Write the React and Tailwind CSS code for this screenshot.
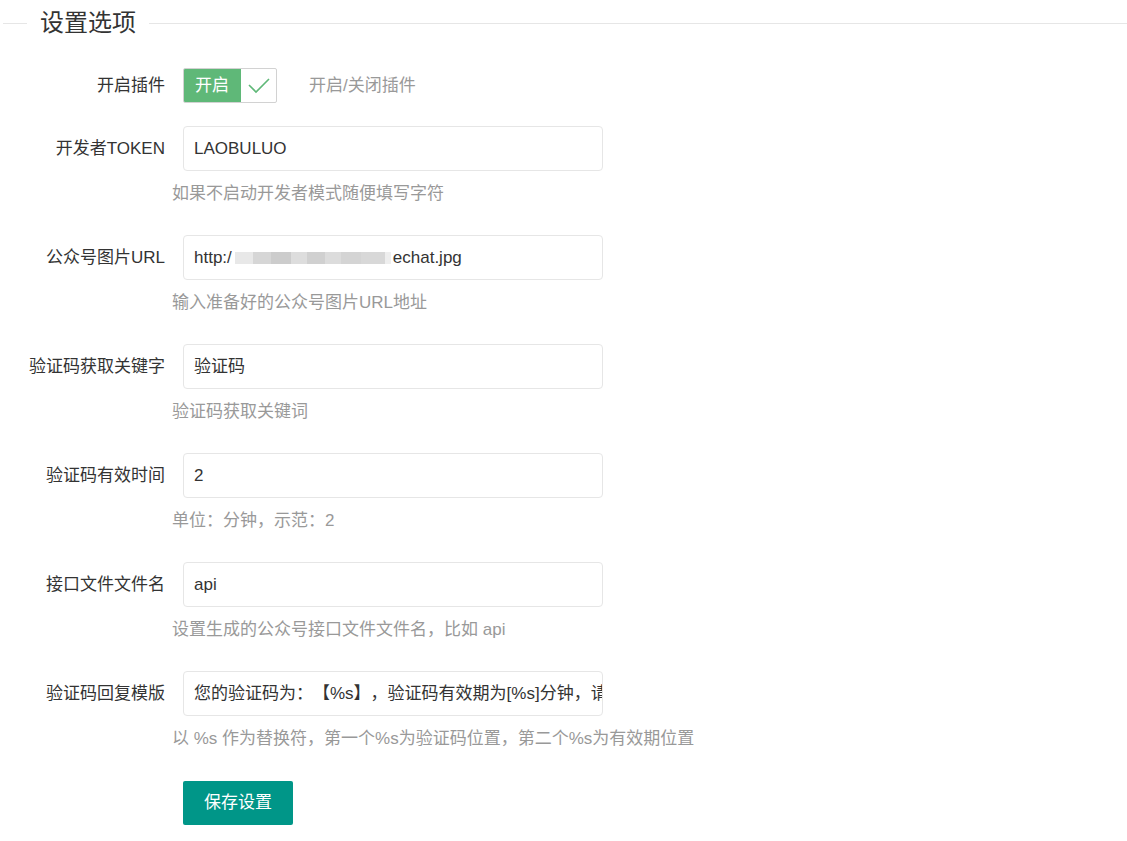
import React from "react";

const FONT = { fontFamily: '"Liberation Sans", Arial, "Noto Sans CJK SC", sans-serif' };

function Row({ label, children, hint }) {
  return (
    <div className="mt-[18px]">
      <div className="flex">
        <div className="w-[183px] shrink-0 pr-[18px] text-right whitespace-nowrap leading-[45px] text-[17px] text-[#333]">
          {label}
        </div>
        <div className="w-[420px] h-[45px] border border-[#e6e6e6] rounded-[4px] pl-[10px] overflow-hidden whitespace-nowrap leading-[43px] text-[17px] text-[#333]">
          {children}
        </div>
      </div>
      <div className="ml-[172px] h-[46px] leading-[46px] text-[17px] text-[#999] whitespace-nowrap">{hint}</div>
    </div>
  );
}

export default function App() {
  return (
    <div className="w-[1127px] h-[841px] bg-white overflow-hidden [text-spacing-trim:space-all]" style={FONT}>
      <div className="flex items-center h-[46px] pl-[3px]">
        <div className="w-[24px] h-px bg-[#e6e6e6]" />
        <div className="px-[13px] text-[24px] leading-[30px] text-[#333]">设置选项</div>
        <div className="flex-1 h-px bg-[#e6e6e6]" />
      </div>

      <div className="flex items-center h-[35px] mt-[22px]">
        <div className="w-[183px] shrink-0 pr-[18px] text-right text-[17px] text-[#333]">开启插件</div>
        <div className="flex h-[35px] w-[94px] rounded-[2px] border border-[#d2d2d2] overflow-hidden">
          <div className="w-[58px] bg-[#5FB878] text-white text-[17px] leading-[35px] text-center -ml-px -mt-px h-[35px]">开启</div>
          <div className="flex-1 flex items-center justify-center">
            <svg width="24" height="18" viewBox="0 0 24 18" fill="none">
              <polyline points="2,8 9,15 22,2" stroke="#5FB878" strokeWidth="1.6" fill="none" />
            </svg>
          </div>
        </div>
        <div className="ml-[32px] text-[17px] text-[#999]">开启/关闭插件</div>
      </div>

      <div className="mt-[23px]">
        <Row label="开发者TOKEN" hint="如果不启动开发者模式随便填写字符">LAOBULUO</Row>
      </div>
      <Row label="公众号图片URL" hint="输入准备好的公众号图片URL地址">
        <span className="inline-flex items-center">
          http:/
          <span className="inline-flex h-[12px] ml-[3px] mr-[2px] items-stretch">
            <span className="w-[18px] bg-[#e8e8e8]" />
            <span className="w-[18px] bg-[#d6d6d6]" />
            <span className="w-[20px] bg-[#cccccc]" />
            <span className="w-[16px] bg-[#dddddd]" />
            <span className="w-[18px] bg-[#d0d0d0]" />
            <span className="w-[16px] bg-[#dcdcdc]" />
            <span className="w-[20px] bg-[#d4d4d4]" />
            <span className="w-[24px] bg-[#d8d8d8]" />
            <span className="w-[6px] bg-[#eeeeee]" />
          </span>
          echat.jpg
        </span>
      </Row>
      <Row label="验证码获取关键字" hint="验证码获取关键词">验证码</Row>
      <Row label="验证码有效时间" hint="单位：分钟，示范：2">2</Row>
      <Row label="接口文件文件名" hint="设置生成的公众号接口文件文件名，比如 api">api</Row>
      <Row label="验证码回复模版" hint="以 %s 作为替换符，第一个%s为验证码位置，第二个%s为有效期位置">
        您的验证码为：【%s】，验证码有效期为[%s]分钟，请尽快使用
      </Row>

      <div className="ml-[183px] mt-[19px]">
        <button className="w-[110px] h-[44px] rounded-[2px] bg-[#009688] text-white text-[17px]">保存设置</button>
      </div>
    </div>
  );
}
